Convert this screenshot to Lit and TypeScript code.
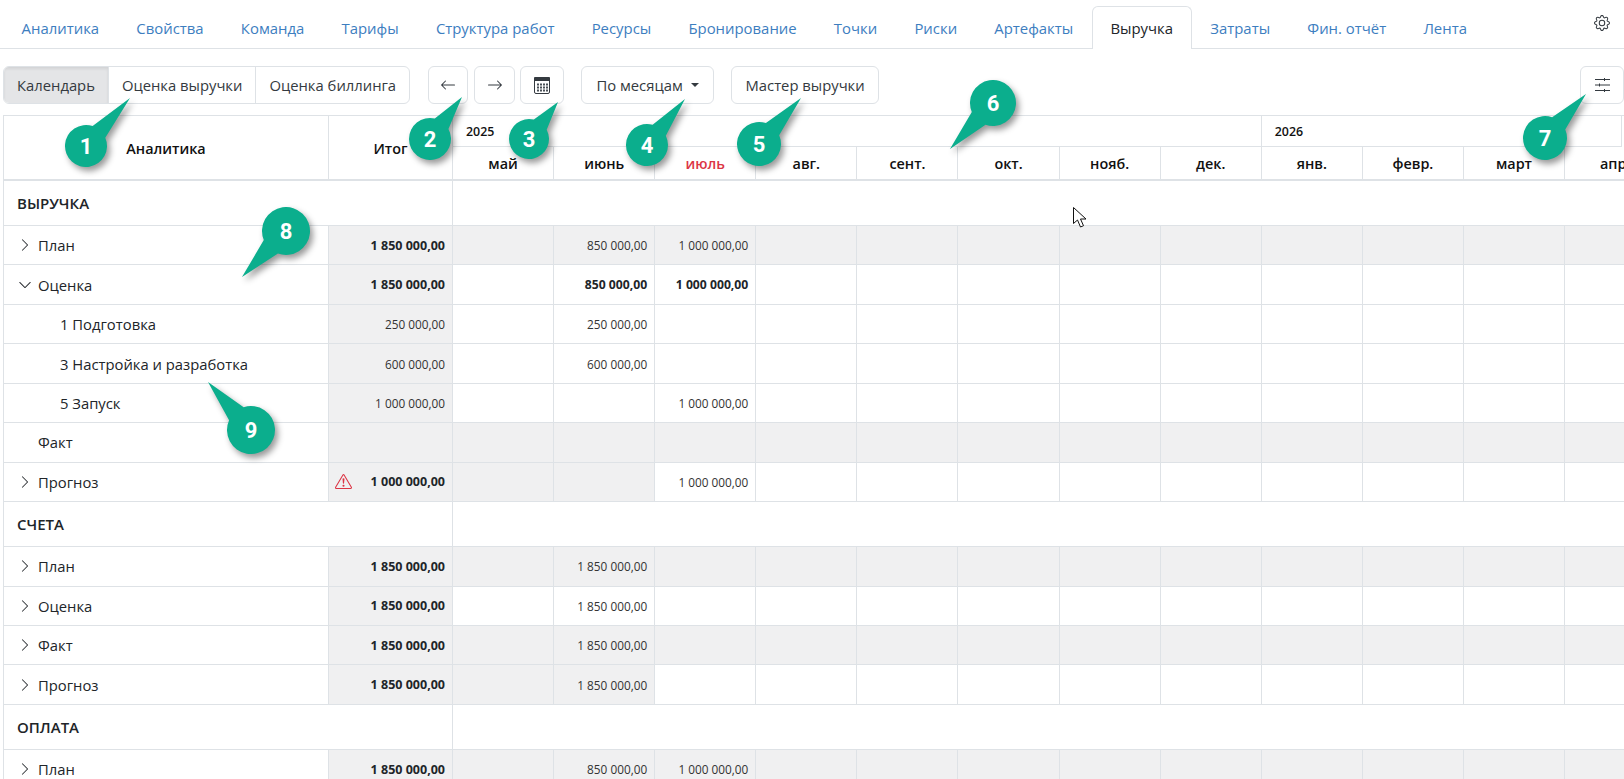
import { LitElement, css, html, svg } from "lit";
import { customElement } from "lit/decorators.js";

type Row = {
  label: string;
  icon?: "right" | "down";
  child?: boolean;
  total?: string;
  strong?: boolean;
  warn?: boolean;
  shade: "all" | "past" | "none";
  values?: Record<number, string>;
};
type Section = { title: string; rows: Row[] };

const TABS = [
  "Аналитика",
  "Свойства",
  "Команда",
  "Тарифы",
  "Структура работ",
  "Ресурсы",
  "Бронирование",
  "Точки",
  "Риски",
  "Артефакты",
  "Выручка",
  "Затраты",
  "Фин. отчёт",
  "Лента"
];
const MONTHS = ["май", "июнь", "июль", "авг.", "сент.", "окт.", "нояб.", "дек.", "янв.", "февр.", "март", "апр."];

const SECTIONS: Section[] = [
  {
    title: "ВЫРУЧКА",
    rows: [
      { label: "План", icon: "right", total: "1 850 000,00", strong: true, shade: "all", values: { 1: "850 000,00", 2: "1 000 000,00" } },
      { label: "Оценка", icon: "down", total: "1 850 000,00", strong: true, shade: "none", values: { 1: "850 000,00", 2: "1 000 000,00" } },
      { label: "1 Подготовка", child: true, total: "250 000,00", shade: "none", values: { 1: "250 000,00" } },
      { label: "3 Настройка и разработка", child: true, total: "600 000,00", shade: "none", values: { 1: "600 000,00" } },
      { label: "5 Запуск", child: true, total: "1 000 000,00", shade: "none", values: { 2: "1 000 000,00" } },
      { label: "Факт", shade: "all" },
      { label: "Прогноз", icon: "right", total: "1 000 000,00", strong: true, warn: true, shade: "past", values: { 2: "1 000 000,00" } }
    ]
  },
  {
    title: "СЧЕТА",
    rows: [
      { label: "План", icon: "right", total: "1 850 000,00", strong: true, shade: "all", values: { 1: "1 850 000,00" } },
      { label: "Оценка", icon: "right", total: "1 850 000,00", strong: true, shade: "none", values: { 1: "1 850 000,00" } },
      { label: "Факт", icon: "right", total: "1 850 000,00", strong: true, shade: "all", values: { 1: "1 850 000,00" } },
      { label: "Прогноз", icon: "right", total: "1 850 000,00", strong: true, shade: "past", values: { 1: "1 850 000,00" } }
    ]
  },
  {
    title: "ОПЛАТА",
    rows: [{ label: "План", icon: "right", total: "1 850 000,00", strong: true, shade: "all", values: { 1: "850 000,00", 2: "1 000 000,00" } }]
  }
];

// callout number, circle centre and radius, tip of the tail
const CALLOUTS = [
  { n: 1, x: 86, y: 146, r: 21, tx: 130, ty: 98 },
  { n: 2, x: 430, y: 139, r: 21, tx: 462, ty: 97 },
  { n: 3, x: 529, y: 139, r: 20, tx: 558, ty: 102 },
  { n: 4, x: 647, y: 145, r: 21, tx: 685, ty: 99 },
  { n: 5, x: 759, y: 144, r: 22, tx: 801, ty: 98 },
  { n: 6, x: 993, y: 103, r: 23, tx: 950, ty: 149 },
  { n: 7, x: 1545, y: 138, r: 22, tx: 1586, ty: 94 },
  { n: 8, x: 286, y: 231, r: 24, tx: 242, ty: 277 },
  { n: 9, x: 251, y: 430, r: 24, tx: 208, ty: 382 }
];

const arrowLeft = html`<svg width="16" height="16" viewBox="0 0 16 16" fill="currentColor">
  <path d="M15 8a.5.5 0 0 0-.5-.5H2.707l3.147-3.146a.5.5 0 1 0-.708-.708l-4 4a.5.5 0 0 0 0 .708l4 4a.5.5 0 0 0 .708-.708L2.707 8.5H14.5A.5.5 0 0 0 15 8z" />
</svg>`;
const arrowRight = html`<svg width="16" height="16" viewBox="0 0 16 16" fill="currentColor">
  <path d="M1 8a.5.5 0 0 1 .5-.5h11.793l-3.147-3.146a.5.5 0 0 1 .708-.708l4 4a.5.5 0 0 1 0 .708l-4 4a.5.5 0 0 1-.708-.708L13.293 8.5H1.5A.5.5 0 0 1 1 8z" />
</svg>`;
const calendar = html`<svg width="16" height="17" viewBox="0 0 16 17">
  <rect x=".5" y=".5" width="15" height="16" rx="1.5" fill="#fff" stroke="#343a40" />
  <rect x="0" y="0" width="16" height="4" rx="1" fill="#343a40" />
  ${[6.5, 9.5, 12.5].map(y =>
    [3, 6, 9, 12].map(x => svg`<rect x=${x} y=${y} width="2" height="2" fill="#495057" />`)
  )}
</svg>`;
const gear = html`<svg width="16" height="16" viewBox="0 0 16 16" fill="#343a40">
  <path d="M8 4.754a3.246 3.246 0 1 0 0 6.492 3.246 3.246 0 0 0 0-6.492zM5.754 8a2.246 2.246 0 1 1 4.492 0 2.246 2.246 0 0 1-4.492 0z" />
  <path d="M9.796 1.343c-.527-1.79-3.065-1.79-3.592 0l-.094.319a.873.873 0 0 1-1.255.52l-.292-.16c-1.64-.892-3.433.902-2.54 2.541l.159.292a.873.873 0 0 1-.52 1.255l-.319.094c-1.79.527-1.79 3.065 0 3.592l.319.094a.873.873 0 0 1 .52 1.255l-.16.292c-.892 1.64.901 3.434 2.541 2.54l.292-.159a.873.873 0 0 1 1.255.52l.094.319c.527 1.79 3.065 1.79 3.592 0l.094-.319a.873.873 0 0 1 1.255-.52l.292.16c1.64.893 3.434-.902 2.54-2.541l-.159-.292a.873.873 0 0 1 .52-1.255l.319-.094c1.79-.527 1.79-3.065 0-3.592l-.319-.094a.873.873 0 0 1-.52-1.255l.16-.292c.893-1.64-.902-3.433-2.541-2.54l-.292.159a.873.873 0 0 1-1.255-.52l-.094-.319zm-2.633.283c.246-.835 1.428-.835 1.674 0l.094.319a1.873 1.873 0 0 0 2.693 1.115l.291-.16c.764-.415 1.6.42 1.184 1.185l-.159.292a1.873 1.873 0 0 0 1.116 2.692l.318.094c.835.246.835 1.428 0 1.674l-.319.094a1.873 1.873 0 0 0-1.115 2.693l.16.291c.415.764-.42 1.6-1.185 1.184l-.291-.159a1.873 1.873 0 0 0-2.693 1.116l-.094.318c-.246.835-1.428.835-1.674 0l-.094-.319a1.873 1.873 0 0 0-2.692-1.115l-.292.16c-.764.415-1.6-.42-1.184-1.185l.159-.291A1.873 1.873 0 0 0 1.945 8.93l-.319-.094c-.835-.246-.835-1.428 0-1.674l.319-.094A1.873 1.873 0 0 0 3.06 4.377l-.16-.292c-.415-.764.42-1.6 1.185-1.184l.292.159a1.873 1.873 0 0 0 2.692-1.115l.094-.319z" />
</svg>`;
const sliders = html`<svg width="15" height="14" viewBox="0 0 15 14" stroke="#343a40" fill="none">
  <path d="M0 1.5h15M0 7h15M0 12.500h15" />
  <path d="M9.500 0v3M4.500 5.500v3M9.500 11v3" />
</svg>`;
const warning = html`<svg class="warn" width="17" height="17" viewBox="0 0 16 16" fill="#dc3545">
  <path d="M7.938 2.016A.13.13 0 0 1 8.002 2a.13.13 0 0 1 .063.016.146.146 0 0 1 .054.057l6.857 11.667c.036.06.035.124.002.183a.163.163 0 0 1-.054.06.116.116 0 0 1-.066.017H1.146a.115.115 0 0 1-.066-.017.163.163 0 0 1-.054-.06.176.176 0 0 1 .002-.183L7.884 2.073a.147.147 0 0 1 .054-.057zm1.044-.45a1.13 1.13 0 0 0-1.96 0L.165 13.233c-.457.778.091 1.767.98 1.767h13.713c.889 0 1.438-.99.98-1.767L8.982 1.566z" />
  <path d="M7.002 12a1 1 0 1 1 2 0 1 1 0 0 1-2 0zM7.1 5.995a.905.905 0 1 1 1.8 0l-.35 3.507a.552.552 0 0 1-1.1 0L7.1 5.995z" />
</svg>`;
const chevronRight = html`<svg width="14" height="14" viewBox="0 0 16 16" fill="#212529">
  <path d="M4.646 1.646a.5.5 0 0 1 .708 0l6 6a.5.5 0 0 1 0 .708l-6 6a.5.5 0 0 1-.708-.708L10.293 8 4.646 2.354a.5.5 0 0 1 0-.708z" />
</svg>`;
const chevronDown = html`<svg width="14" height="14" viewBox="0 0 16 16" fill="#212529">
  <path d="M1.646 4.646a.5.5 0 0 1 .708 0L8 10.293l5.646-5.647a.5.5 0 0 1 .708.708l-6 6a.5.5 0 0 1-.708 0l-6-6a.5.5 0 0 1 0-.708z" />
</svg>`;

function calloutPath(c: (typeof CALLOUTS)[number]) {
  const a = Math.atan2(c.ty - c.y, c.tx - c.x);
  const spread = 0.42;
  const x1 = c.x + c.r * Math.cos(a - spread);
  const y1 = c.y + c.r * Math.sin(a - spread);
  const x2 = c.x + c.r * Math.cos(a + spread);
  const y2 = c.y + c.r * Math.sin(a + spread);
  return `M${c.tx} ${c.ty}L${x2} ${y2}A${c.r} ${c.r} 0 1 1 ${x1} ${y1}Z`;
}

@customElement("app-root")
export class AppRoot extends LitElement {
  static styles = css`
    :host {
      display: block;
      position: relative;
      width: 1624px;
      height: 779px;
      overflow: hidden;
      background: #fff;
      font-family: "Open Sans", "Noto Sans", sans-serif;
      color: #212529;
    }

    .tabs {
      display: flex;
      align-items: flex-end;
      height: 49px;
      box-sizing: border-box;
      padding: 7px 0 0 3px;
      border-bottom: 1px solid #dee2e6;
    }

    .tab {
      display: flex;
      align-items: center;
      height: 42px;
      box-sizing: border-box;
      padding: 0 17.6px;
      font-size: 14.9px;
      color: #3d7ebf;
      border: 1px solid transparent;
      border-bottom: 0;
      border-radius: 6px 6px 0 0;
    }

    .tab.active {
      color: #212529;
      background: #fff;
      border-color: #dee2e6;
      margin-bottom: -1px;
      height: 43px;
    }

    .gear {
      margin: 0 14px 17px auto;
      line-height: 0;
    }

    .toolbar {
      display: flex;
      align-items: center;
      height: 38px;
      padding: 17px 0 0 3px;
      font-size: 14.8px;
      color: #343a40;
    }

    .group {
      display: flex;
      height: 38px;
      box-sizing: border-box;
      border: 1px solid #dee2e6;
      border-radius: 6px;
      overflow: hidden;
    }

    .group span {
      display: flex;
      align-items: center;
      padding: 0 13px;
      border-left: 1px solid #dee2e6;
    }

    .group span:first-child {
      border-left: 0;
    }

    .group .on {
      background: #e4e5e7;
      box-shadow: inset 0 2px 3px rgba(0, 0, 0, 0.08);
    }

    .btn {
      display: flex;
      align-items: center;
      justify-content: center;
      height: 38px;
      box-sizing: border-box;
      border: 1px solid #dee2e6;
      border-radius: 6px;
      padding: 0 13px;
    }

    .prev {
      width: 40px;
      padding: 0;
      margin-left: 18px;
    }

    .next {
      width: 41px;
      padding: 0;
      margin-left: 6px;
    }

    .cal {
      width: 44px;
      padding: 0;
      margin-left: 5px;
    }

    .period {
      width: 133px;
      padding: 0;
      margin-left: 17px;
      gap: 8px;
    }

    .caret {
      width: 0;
      height: 0;
      border: 4px solid transparent;
      border-top-color: #343a40;
      border-bottom: 0;
    }

    .wizard {
      width: 148px;
      padding: 0;
      margin-left: 17px;
    }

    .settings {
      width: 44px;
      padding: 0;
      margin-left: auto;
    }

    .table {
      margin: 11px 0 0 3px;
      overflow: hidden;
    }

    .head,
    .row {
      display: grid;
      grid-template-columns: 325px 124px repeat(12, 101.1px);
    }

    .head {
      grid-template-rows: 31px 32px;
      border-top: 1px solid #dee2e6;
      border-bottom: 2px solid #dee2e6;
      font-weight: 600;
      color: #111;
    }

    .head > div {
      display: flex;
      align-items: center;
      justify-content: center;
      padding-top: 1px;
      border-left: 1px solid #dee2e6;
      font-size: 14.4px;
    }

    .head .main {
      grid-row: span 2;
    }

    .head .year {
      justify-content: flex-start;
      padding: 0 0 0 13px;
      font-size: 12.4px;
      border-bottom: 1px solid #dee2e6;
    }

    .head .y25 {
      grid-column: span 8;
    }

    .head .y26 {
      grid-column: span 4;
      box-sizing: border-box;
      width: 361px;
      border-right: 1px solid #dee2e6;
    }

    .head .red {
      color: #dc3545;
    }

    .body > div {
      box-sizing: border-box;
      border-bottom: 1px solid #dee2e6;
    }

    .row {
      height: 39.45px;
    }

    .section {
      display: grid;
      grid-template-columns: 449px 1fr;
      height: 45px;
    }

    .section .title {
      display: flex;
      align-items: center;
      padding-left: 13px;
      font-size: 15px;
      font-weight: 600;
      border-left: 1px solid #dee2e6;
    }

    .section .rest {
      border-left: 1px solid #dee2e6;
    }

    .cell {
      display: flex;
      align-items: center;
      justify-content: flex-end;
      padding-right: 7px;
      font-size: 11.8px;
      border-left: 1px solid #dee2e6;
      color: #333;
    }

    .cell.grey {
      background: #f0f0f1;
    }

    .cell.bold {
      font-size: 12.2px;
      font-weight: 700;
      color: #212529;
    }

    .cell.bold.total {
      font-size: 12.5px;
    }

    .cell.name {
      justify-content: flex-start;
      padding-left: 14px;
      font-size: 14.8px;
      color: #212529;
    }

    .cell.name svg {
      margin-right: 6px;
    }

    .cell.name .gap {
      width: 20px;
    }

    .cell.name.child {
      padding-left: 56px;
    }

    .warn {
      margin-right: auto;
      margin-left: 6px;
    }

    .overlay {
      position: absolute;
      inset: 0;
      pointer-events: none;
    }

    .overlay .pin {
      fill: #0bae8d;
      filter: drop-shadow(3px 4px 3px rgba(0, 0, 0, 0.4));
    }

    .overlay text {
      font-family: Roboto, sans-serif;
      font-weight: 700;
      font-size: 22px;
      fill: #fff;
      text-anchor: middle;
    }
  `;

  render() {
    return html`
      <nav class="tabs">
        ${TABS.map(t => html`<div class="tab ${t === "Выручка" ? "active" : ""}">${t}</div>`)}
        <div class="gear">${gear}</div>
      </nav>
      <div class="toolbar">
        <div class="group">
          <span class="on">Календарь</span>
          <span>Оценка выручки</span>
          <span>Оценка биллинга</span>
        </div>
        <div class="btn prev">${arrowLeft}</div>
        <div class="btn next">${arrowRight}</div>
        <div class="btn cal">${calendar}</div>
        <div class="btn period">По месяцам <i class="caret"></i></div>
        <div class="btn wizard">Мастер выручки</div>
        <div class="btn settings">${sliders}</div>
      </div>
      <div class="table">
        <div class="head">
          <div class="main">Аналитика</div>
          <div class="main">Итог</div>
          <div class="year y25">2025</div>
          <div class="year y26">2026</div>
          ${MONTHS.map(m => html`<div class=${m === "июль" ? "red" : ""}>${m}</div>`)}
        </div>
        <div class="body">${SECTIONS.map(s => this._renderSection(s))}</div>
      </div>
      <svg class="overlay" width="1624" height="779">
        ${CALLOUTS.map(
          c => svg`<path class="pin" d=${calloutPath(c)} /><text x=${c.x} y=${c.y + 8}>${c.n}</text>`
        )}
        <path d="M1073.5 207.5v16l4-3.5 3 7 3-1.300-3-6.700h5.500z" fill="#fff" stroke="#111" />
      </svg>
    `;
  }

  private _renderSection(section: Section) {
    return html`
      <div class="section">
        <div class="title">${section.title}</div>
        <div class="rest"></div>
      </div>
      ${section.rows.map(row => this._renderRow(row))}
    `;
  }

  private _renderRow(row: Row) {
    const icon = row.icon === "right" ? chevronRight : row.icon === "down" ? chevronDown : null;
    return html`<div class="row">
      <div class="cell name ${row.child ? "child" : ""}">
        ${row.child ? null : icon ?? html`<i class="gap"></i>`}${row.label}
      </div>
      <div class="cell grey total ${row.strong ? "bold" : ""}">${row.warn ? warning : null}${row.total}</div>
      ${MONTHS.map((_, i) => {
        const grey = row.shade === "all" || (row.shade === "past" && i < 2);
        return html`<div class="cell ${grey ? "grey" : ""} ${row.icon === "down" ? "bold" : ""}">
          ${row.values?.[i] ?? ""}
        </div>`;
      })}
    </div>`;
  }
}
